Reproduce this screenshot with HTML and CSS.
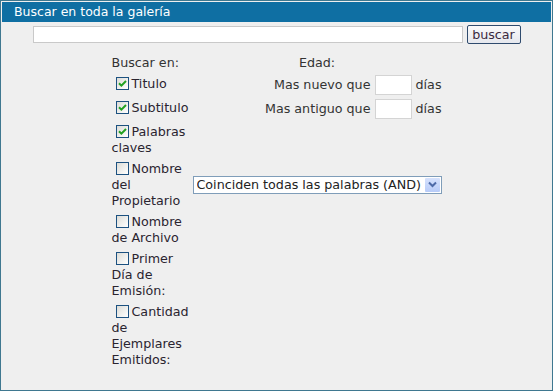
FILE: index.html
```html
<!DOCTYPE html>
<html lang="es">
<head>
    <meta charset="UTF-8">
    <meta name="viewport" content="width=device-width, initial-scale=1.0">
    <title>Buscar en toda la galería</title>
    <link rel="stylesheet" href="styles.css">
</head>
<body>

    <div class="panel">
        <div class="panel-title">Buscar en toda la galería</div>

        <form class="search" onsubmit="return false;">
            <!-- Search bar -->
            <div class="search-bar">
                <input type="text" class="search-input">
                <button type="submit" class="search-btn">buscar</button>
            </div>

            <!-- Options -->
            <div class="options">
                <div class="opt-head">Buscar en:</div>
                <div class="age-head">Edad:</div>

                <label class="opt"><input type="checkbox" checked>Titulo</label>
                <div class="age">Mas nuevo que <input type="text" class="age-input"> días</div>

                <label class="opt"><input type="checkbox" checked>Subtitulo</label>
                <div class="age">Mas antiguo que <input type="text" class="age-input"> días</div>

                <label class="opt"><input type="checkbox" checked>Palabras claves</label>
                <div></div>

                <label class="opt"><input type="checkbox">Nombre del Propietario</label>
                <div class="match">
                    <select class="match-select">
                        <option>Coinciden todas las palabras (AND)</option>
                        <option>Coincide alguna palabra (OR)</option>
                    </select>
                    <span class="match-arrow">
                        <svg width="9" height="7" viewBox="0 0 9 7"><path d="M1 1.5l3.5 3.5L8 1.5" fill="none" stroke="#4d6aa8" stroke-width="2"/></svg>
                    </span>
                </div>

                <label class="opt"><input type="checkbox">Nombre de Archivo</label>
                <div></div>

                <label class="opt"><input type="checkbox">Primer Día de Emisión:</label>
                <div></div>

                <label class="opt"><input type="checkbox">Cantidad de Ejemplares Emitidos:</label>
                <div></div>
            </div>
        </form>
    </div>

</body>
</html>
```

FILE: styles.css
```css
/* Page */
body {
    margin: 0;
    font-family: "DejaVu Sans", Verdana, sans-serif;
    font-size: 12.7px;
    line-height: 16px;
    color: #333;
    background: #fff;
}

/* Panel box */
.panel {
    width: 549px;
    border: 1px solid #3f7890;
    padding: 1px;
    padding-bottom: 22px;
    background-color: #efefef;
}
.panel-title {
    height: 20px;
    line-height: 20px;
    padding-left: 12px;
    background-color: #0f6fa3;
    color: white;
    font-size: 12.5px;
}

/* Search bar */
.search-bar {
    display: flex;
    justify-content: center;
    align-items: flex-end;
    gap: 4px;
    margin: 3px 0 11px;
}
.search-input {
    width: 428px;
    height: 15px;
    margin: 0 0 1px;
    padding: 0;
    border: 1px solid #c9c9c9;
    background: white;
}
.search-btn {
    width: 54px;
    height: 19px;
    padding: 0;
    border: 1px solid #2f4b6e;
    border-radius: 2px;
    background: linear-gradient(#fafafa, #e6e8ee);
    font-family: inherit;
    font-size: 12.7px;
    color: #3a2a40;
}

/* Options grid */
.options {
    display: grid;
    grid-template-columns: 80px 249px;
    column-gap: 1px;
    row-gap: 4px;
    justify-content: center;
    align-items: start;
}
.age-head {
    text-align: center;
}
.age {
    height: 20px;
    line-height: 20px;
    text-align: right;
}
.age-input {
    width: 35px;
    height: 18px;
    margin: 0;
    padding: 0;
    vertical-align: top;
    border: 1px solid #d4d4d4;
    background: white;
}

/* Checkbox labels */
.opt {
    padding-top: 1px;
    color: #2a2430;
}
.opt input {
    appearance: none;
    -webkit-appearance: none;
    width: 13px;
    height: 13px;
    margin: 0 3px 0 4px;
    vertical-align: -2px;
    border: 1px solid #1c5180;
    background: linear-gradient(135deg, #dcdcd7, #ffffff);
}
.opt input:checked {
    background: url("data:image/svg+xml,%3Csvg xmlns='http://www.w3.org/2000/svg' width='11' height='11'%3E%3Cpath d='M2 5.2l2.4 2.4L9 3' fill='none' stroke='%2321a121' stroke-width='2'/%3E%3C/svg%3E") center no-repeat,
                linear-gradient(135deg, #dcdcd7, #ffffff);
}

/* Match select */
.match {
    align-self: center;
    display: flex;
    height: 16px;
    border: 1px solid #7f9db9;
    background: white;
}
.match-select {
    flex: 1;
    min-width: 0;
    appearance: none;
    -webkit-appearance: none;
    border: 0;
    padding: 0 0 0 3px;
    background: transparent;
    font-family: inherit;
    font-size: 12.7px;
    color: #222;
}
.match-arrow {
    width: 15px;
    margin: 1px;
    display: flex;
    align-items: center;
    justify-content: center;
    background: linear-gradient(#d6e2fd, #b7cbf8);
    border-radius: 1px;
}
```
